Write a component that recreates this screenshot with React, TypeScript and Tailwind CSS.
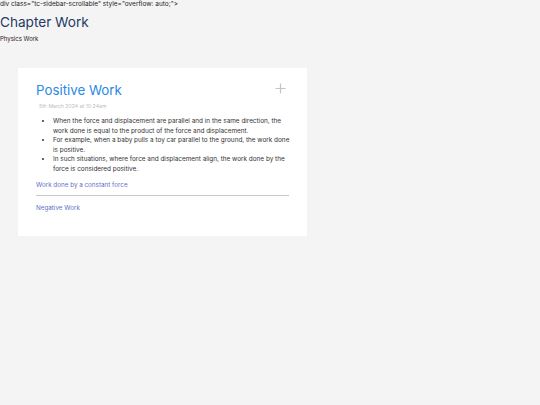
export default function App() {
  return (
    <div className="min-h-[405px] w-[540px] bg-[#f4f4f4] text-[#333] overflow-hidden" style={{ fontFamily: 'Inter, "Noto Sans", sans-serif' }}>
      <div className="text-[6.5px] leading-[9px] text-[#222]">div class="tc-sidebar-scrollable" style="overflow: auto;"&gt;</div>
      <h1 className="text-[13.6px] leading-[18px] mt-[4px] text-[#243a66] font-normal">Chapter Work</h1>
      <div className="text-[6px] leading-[8px] mt-[4px] text-[#222]">Physics Work</div>
      <div className="ml-[18px] mt-[25px] w-[289px] h-[168px] bg-white pl-[18px] pr-[18px] pt-[13px]">
        <div className="flex items-start justify-between">
          <h2 className="text-[13.3px] leading-[18px] text-[#2a8ae6] font-normal">Positive Work</h2>
          <svg width="11" height="11" viewBox="0 0 11 11" className="mt-[2px] mr-[3px]">
            <path d="M5.5 0.5v10M0.5 5.5h10" stroke="#c4c4c4" strokeWidth="1.2" />
          </svg>
        </div>
        <div className="text-[5.2px] leading-[8px] text-[#bdbdbd] mt-[3px] ml-[3px]">5th March 2024 at 10:24am</div>
        <ul className="list-disc pl-[17px] mr-[-4px] mt-[7px] text-[6.4px] leading-[9.5px] text-[#333] marker:text-[#333]">
          <li>When the force and displacement are parallel and in the same direction, the work done is equal to the product of the force and displacement.</li>
          <li>For example, when a baby pulls a toy car parallel to the ground, the work done is positive.</li>
          <li>In such situations, where force and displacement align, the work done by the force is considered positive.</li>
        </ul>
        <div className="mt-[7px] text-[6.3px] leading-[9px] text-[#5f70c9]">Work done by a constant force</div>
        <div className="mt-[5px] h-px bg-[#c8c8c8] w-[253px]" />
        <div className="mt-[8px] text-[6.3px] leading-[9px] text-[#5f70c9]">Negative Work</div>
      </div>
    </div>
  );
}
